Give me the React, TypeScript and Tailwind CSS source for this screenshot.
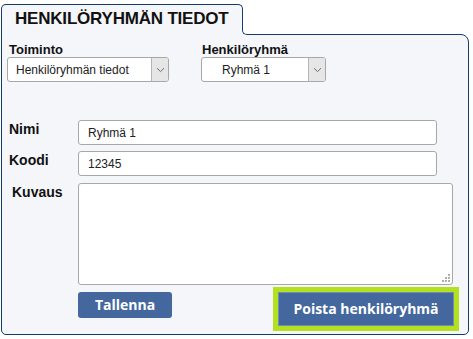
import React from "react";

const NAVY = "border-[#133b6c]";

function Chevron() {
  return (
    <svg width="9" height="6" viewBox="0 0 9 6" fill="none">
      <path d="M1 1.2 L4.5 4.6 L8 1.2" stroke="#6b6b6b" strokeWidth="1" />
    </svg>
  );
}

function Grip() {
  return (
    <svg width="8" height="8" viewBox="0 0 8 8" className="absolute bottom-[3px] right-[3px]">
      <rect x="6" y="0" width="2" height="2" fill="#b0b0b0" />
      <rect x="3" y="3" width="2" height="2" fill="#b0b0b0" />
      <rect x="6" y="3" width="2" height="2" fill="#b0b0b0" />
      <rect x="0" y="6" width="2" height="2" fill="#b0b0b0" />
      <rect x="3" y="6" width="2" height="2" fill="#b0b0b0" />
      <rect x="6" y="6" width="2" height="2" fill="#b0b0b0" />
    </svg>
  );
}

function Select({ text, pad, width }: { text: string; pad: string; width: string }) {
  return (
    <div className={`flex h-[25px] ${width} overflow-hidden rounded-[3px] border border-[#a8a8a8] bg-white`}>
      <div className={`flex flex-1 items-center ${pad} text-[12px] text-[#222]`}>{text}</div>
      <div className="flex w-[17px] items-center justify-center border-l border-[#b5b5b5] bg-[#e6e6e6]">
        <Chevron />
      </div>
    </div>
  );
}

export default function App() {
  return (
    <div
      className="h-[339px] w-[473px] bg-white pl-px pt-[4px]"
      style={{ fontFamily: '"Liberation Sans", Arial, sans-serif' }}
    >
      <div
        className={`relative z-10 -mb-px h-[31px] w-[242px] rounded-t-[5px] border border-b-0 ${NAVY} bg-[#f4f6fa] pl-[13px] pt-[4px]`}
      >
        <div className="text-[17px] font-bold leading-[20px] tracking-[-0.2px] text-[#111]">
          HENKILÖRYHMÄN TIEDOT
        </div>
        <div className="absolute -right-[7px] bottom-0 h-[7px] w-[7px] bg-[#f4f6fa]">
          <div className={`h-full w-full rounded-bl-[5px] border-b border-l ${NAVY} bg-white`} />
        </div>
      </div>
      <div
        className={`h-[301px] w-[468px] rounded-b-[5px] rounded-tr-[8px] border ${NAVY} bg-[#f4f6fa] pt-[7px]`}
      >
        <div className="flex pl-[5px]">
          <div className="w-[194px]">
            <div className="ml-[2px] text-[13px] font-bold leading-[15px] text-[#111]">Toiminto</div>
            <Select text="Henkilöryhmän tiedot" pad="pl-[8px]" width="w-[162px]" />
          </div>
          <div>
            <div className="ml-px text-[13px] font-bold leading-[15px] text-[#111]">Henkilöryhmä</div>
            <Select text="Ryhmä 1" pad="pl-[20px]" width="w-[125px]" />
          </div>
        </div>

        <div className="mt-[38px] flex flex-col pl-[7px]">
          <div className="flex items-start">
            <div className="w-[69px] pt-[1px] text-[14px] font-bold leading-[16px] text-[#111]">Nimi</div>
            <div className="flex h-[25px] w-[359px] items-center rounded-[3px] border border-[#a8a8a8] bg-white pl-[9px] text-[12px] text-[#222]">
              Ryhmä 1
            </div>
          </div>
          <div className="mt-[6px] flex items-start">
            <div className="w-[69px] pt-[1px] text-[14px] font-bold leading-[16px] text-[#111]">Koodi</div>
            <div className="flex h-[25px] w-[359px] items-center rounded-[3px] border border-[#a8a8a8] bg-white pl-[9px] text-[12px] text-[#222]">
              12345
            </div>
          </div>
          <div className="mt-[7px] flex items-start">
            <div className="w-[69px] pl-[3px] pt-[1px] text-[14px] font-bold leading-[16px] text-[#111]">Kuvaus</div>
            <div className="relative">
              <textarea
                className="block h-[102px] w-[375px] resize-none rounded-[3px] border border-[#a8a8a8] bg-white text-[12px] outline-none"
                defaultValue=""
              />
              <Grip />
            </div>
          </div>
        </div>

        <div
          className="ml-[76px] flex items-start"
          style={{ fontFamily: '"Open Sans", "Liberation Sans", sans-serif' }}
        >
          <button className="mt-[7px] h-[26px] w-[94px] rounded-[3px] bg-[#44679e] text-[14px] font-bold leading-none text-white">
            Tallenna
          </button>
          <div className="ml-[101px] mt-[2px] h-[44px] w-[186px] bg-[#b3e11f] p-[5px]">
            <button className="h-full w-full border border-[#6f8cb8] bg-[#44679e] text-[14px] font-bold leading-none text-white">
              Poista henkilöryhmä
            </button>
          </div>
        </div>
      </div>
    </div>
  );
}
